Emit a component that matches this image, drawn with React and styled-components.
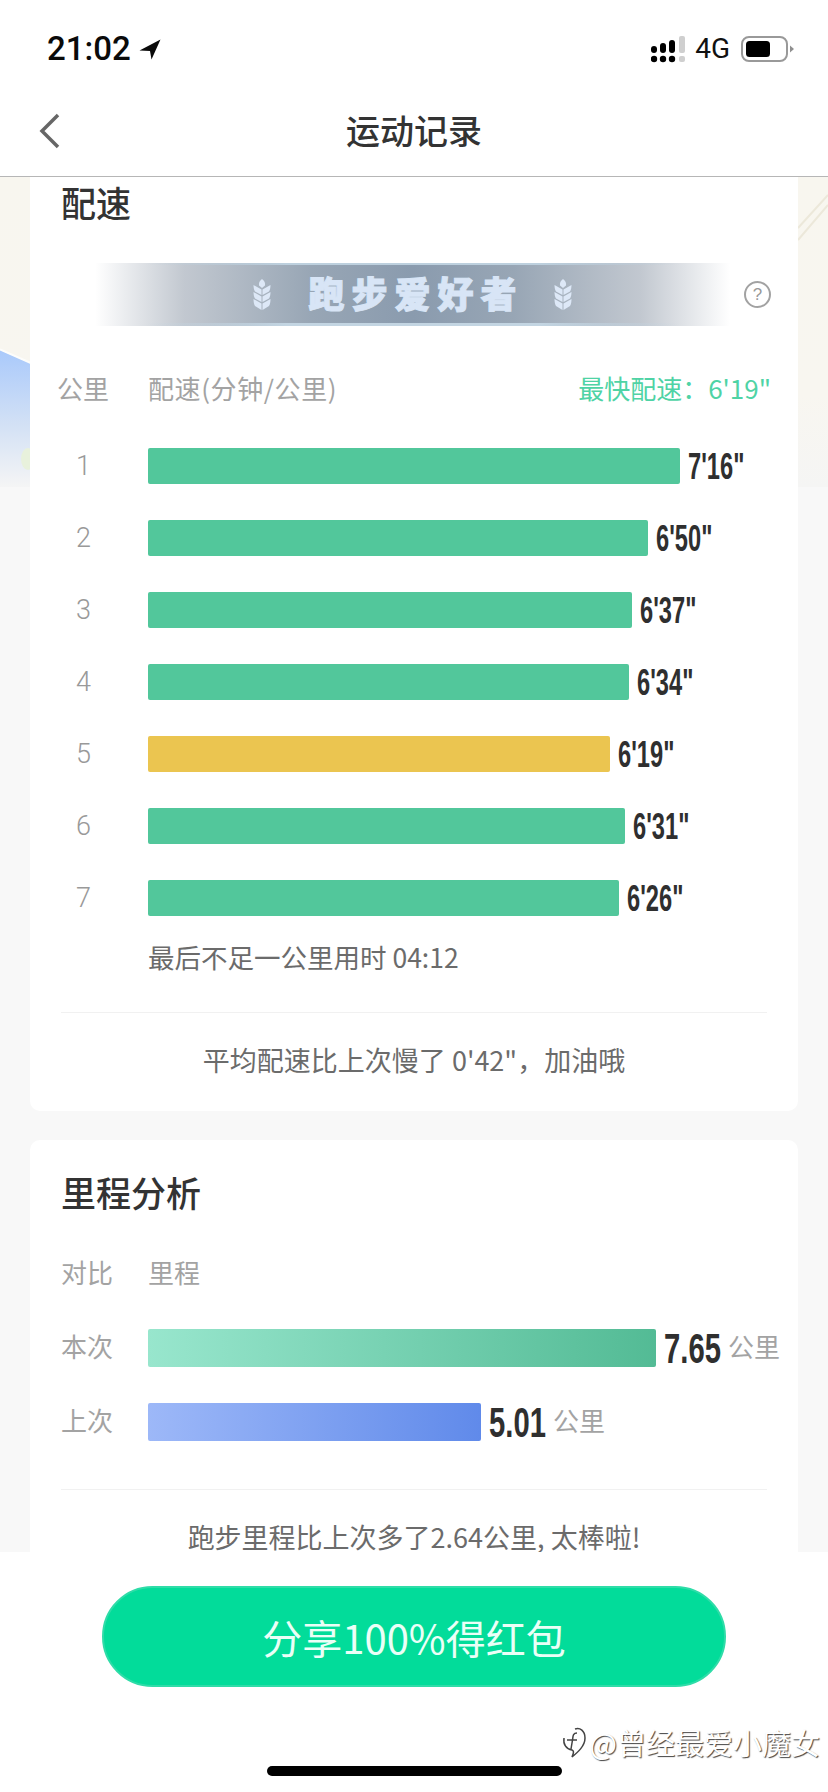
import React from 'react';
import styled, { createGlobalStyle } from 'styled-components';

const GlobalStyle = createGlobalStyle`
  html, body { margin: 0; padding: 0; background: #fff; }
  body { font-family: "Noto Sans CJK SC", "Noto Sans", sans-serif; }
`

const Page = styled.div`
  width: 828px;
  height: 1792px;
  display: flex;
  flex-direction: column;
  position: relative;
  overflow: hidden;
  background: #fff;
`

const StatusBar = styled.div`
  height: 88px;
  flex: none;
  display: flex;
  align-items: center;
  justify-content: space-between;
  padding: 10px 34px 0 47px;
  box-sizing: border-box;
`

const StatusGroup = styled.div`
  display: flex;
  align-items: center;
`

const Clock = styled.span`
  font-family: Roboto, "Liberation Sans", sans-serif;
  font-weight: 500;
  font-size: 33px;
  line-height: 40px;
  color: #0a0a0a;
  margin-right: 8px;
`

const Network = styled.span`
  font-family: Roboto, "Liberation Sans", sans-serif;
  font-size: 28px;
  line-height: 30px;
  color: #111;
  margin: 0 11px 0 10px;
`

const NavBar = styled.div`
  height: 89px;
  flex: none;
  box-sizing: border-box;
  border-bottom: 1px solid #b6b6b6;
  display: flex;
  align-items: center;
  justify-content: center;
  position: relative;
`

const BackIcon = styled.svg`
  position: absolute;
  left: 38px;
  top: 25px;
`

const NavTitle = styled.h1`
  margin: 0 0 4px;
  font-size: 34px;
  font-weight: 500;
  line-height: 44px;
  color: #333;
`

const Scroll = styled.div`
  flex: 1;
  min-height: 0;
  overflow: hidden;
  position: relative;
  background: #f8f8f8;
  display: flex;
  flex-direction: column;
  align-items: center;
  gap: 29px;
`

const MapBackdrop = styled.svg`
  position: absolute;
  left: 0;
  top: 0;
`

const Card = styled.section`
  position: relative;
  flex: none;
  width: 768px;
  box-sizing: border-box;
  background: #fff;
  border-radius: ${p => (p.$clipped ? '0 0 10px 10px' : '10px')};
  padding: ${p => (p.$clipped ? '0 31px 31px' : '27px 31px 31px')};
`

const CardTitle = styled.h2`
  margin: 0;
  height: 54px;
  font-size: 35px;
  font-weight: 500;
  line-height: 50px;
  color: #333;
`

const BannerRow = styled.div`
  display: flex;
  align-items: center;
  margin: 32px 0 0 34px;
`

const Banner = styled.div`
  width: 635px;
  height: 63px;
  flex: none;
  box-sizing: border-box;
  display: flex;
  align-items: center;
  justify-content: center;
  gap: 37px;
  background:
    linear-gradient(90deg, rgba(190, 208, 224, 0) 8%, #bdd0de 30%, #bdd0de 70%, rgba(190, 208, 224, 0) 92%) top / 100% 2px no-repeat,
    linear-gradient(90deg, rgba(190, 208, 224, 0) 8%, #c3d5e2 30%, #c3d5e2 70%, rgba(190, 208, 224, 0) 92%) bottom / 100% 3px no-repeat,
    linear-gradient(90deg, rgba(138, 154, 172, 0) 0%, #c2c8d0 14%, #98a6b5 34%, #8a9bae 50%, #98a6b5 66%, #c2c8d0 86%, rgba(138, 154, 172, 0) 100%);
`

const BannerText = styled.span`
  font-size: 36px;
  font-weight: 900;
  line-height: 44px;
  letter-spacing: 7px;
  margin: 0 -7px 6px 0;
  color: #d8e5f6;
  -webkit-text-stroke: 1px #d8e5f6;
`

const HelpBadge = styled.span`
  width: 27px;
  height: 27px;
  flex: none;
  margin-left: 14px;
  box-sizing: border-box;
  border: 2px solid #a2a2a2;
  border-radius: 50%;
  display: flex;
  align-items: center;
  justify-content: center;
  font-family: "Liberation Sans", sans-serif;
  font-size: 17px;
  color: #999;
`

const HeadRow = styled.div`
  display: flex;
  align-items: center;
  height: 36px;
  box-sizing: border-box;
  padding-bottom: 4px;
  margin-top: ${p => p.$top}px;
`

const HeadCell = styled.span`
  width: ${p => p.$width || 'auto'};
  margin-left: ${p => p.$shift || 0}px;
  flex: ${p => (p.$grow ? 1 : 'none')};
  font-size: 26px;
  line-height: 32px;
  letter-spacing: ${p => p.$spread || 0}px;
  color: #a3a3a3;
`

const FastestPace = styled.span`
  font-size: 26px;
  line-height: 32px;
  color: #4fd3a5;
  margin-right: -4px;
`

const BarList = styled.div`
  display: flex;
  flex-direction: column;
  gap: ${p => p.$gap}px;
  margin-top: ${p => p.$top}px;
`

const BarRow = styled.div`
  display: flex;
  align-items: center;
  height: ${p => p.$height}px;
`

const KmLabel = styled.span`
  width: 87px;
  flex: none;
  box-sizing: border-box;
  padding-left: 15px;
  font-family: Roboto, sans-serif;
  font-weight: 300;
  font-size: 27px;
  color: #999;
`

const CompareLabel = styled.span`
  width: 87px;
  flex: none;
  box-sizing: border-box;
  padding-bottom: 4px;
  font-size: 26px;
  line-height: 32px;
  color: #a3a3a3;
`

const Bar = styled.div`
  height: 100%;
  flex: none;
  border-radius: 2px;
  background: ${p => p.$fill};
`

const Value = styled.span`
  flex: none;
  width: ${p => p.$width}px;
  margin-left: 8px;
  font-family: "Liberation Sans", sans-serif;
  font-weight: 700;
  font-size: ${p => p.$size}px;
  line-height: 1;
  color: #2f2f2f;
  white-space: nowrap;
  transform: scaleX(${p => p.$squeeze});
  transform-origin: left center;
`

const Unit = styled.span`
  flex: none;
  margin-left: 6px;
  padding-bottom: 4px;
  font-size: 26px;
  line-height: 32px;
  white-space: nowrap;
  color: #a3a3a3;
`

const Note = styled.p`
  margin: 25px 0 0 87px;
  padding-bottom: 4px;
  font-size: 26.5px;
  line-height: 32px;
  color: #6b6b6b;
`

const Divider = styled.hr`
  margin: ${p => p.$top}px 0 0;
  border: 0;
  height: 1px;
  background: #f1f1f1;
`

const Summary = styled.p`
  margin: 31px 0 0;
  padding-bottom: 4px;
  text-align: center;
  font-size: 27px;
  line-height: 32px;
  color: #6b6b6b;
`

const BottomBar = styled.div`
  flex: none;
  height: 240px;
  background: #fff;
  display: flex;
  flex-direction: column;
  align-items: center;
  position: relative;
`

const ShareButton = styled.button`
  width: 624px;
  height: 101px;
  margin-top: 34px;
  border: 2px solid #2fdca8;
  border-radius: 51px;
  background: #02dc9a;
  color: #eafff7;
  font-family: inherit;
  font-size: 40px;
  padding: 0;
`

const HomeIndicator = styled.div`
  width: 295px;
  height: 10px;
  margin-top: 79px;
  border-radius: 5px;
  background: #000;
`

const Watermark = styled.div`
  position: absolute;
  right: 8px;
  top: 172px;
  display: flex;
  align-items: center;
  gap: 4px;
  font-size: 29px;
  line-height: 36px;
  color: #fff;
  text-shadow: 1px 1px 1px #444;
`

const paces = [
  { km: 1, width: 532, time: `7'16"` },
  { km: 2, width: 500, time: `6'50"` },
  { km: 3, width: 484, time: `6'37"` },
  { km: 4, width: 481, time: `6'34"` },
  { km: 5, width: 462, time: `6'19"`, best: true },
  { km: 6, width: 477, time: `6'31"` },
  { km: 7, width: 471, time: `6'26"` },
];

const compare = [
  { label: '本次', width: 508, value: '7.65', fill: 'linear-gradient(90deg, #98e6cd, #53bb95)' },
  { label: '上次', width: 333, value: '5.01', fill: 'linear-gradient(90deg, #9db8f8, #608aea)' },
];

const Wheat = () => (
  <svg width="18" height="31" viewBox="0 0 18 31" fill="#dde8f7">
    <path d="M9 0c2.500 2 3.500 4 3 6.500L9 9 6 6.500C5.500 4 6.500 2 9 0z" />
    <path d="M0.500 6l8 4.500V16L2 12.500C1 11 0.500 8.500 0.500 6zM17.500 6l-8 4.500V16l6.500-3.500C17 11 17.500 8.500 17.500 6z" />
    <path d="M0.500 13l8 4.500V23L2 19.500C1 18 0.500 15.500 0.500 13zM17.500 13l-8 4.500V23l6.500-3.500C17 18 17.500 15.500 17.500 13z" />
    <path d="M0.500 20l8 4.500V31L2 27C1 25.500 0.500 22.500 0.500 20zM17.500 20l-8 4.500V31l6.500-4C17 25.500 17.500 22.500 17.500 20z" />
  </svg>
);

const App = () => (
  <Page>
    <GlobalStyle />
    <StatusBar>
      <StatusGroup>
        <Clock>21:02</Clock>
        <svg width="22" height="21" viewBox="0 0 22 21">
          <path d="M21.500 0.500L0.500 11.500 11 12 12.500 20.500z" fill="#0a0a0a" />
        </svg>
      </StatusGroup>
      <StatusGroup>
        <svg width="34" height="27" viewBox="0 0 34 27">
          <rect x="0" y="10" width="6" height="7" rx="3" fill="#000" />
          <rect x="9" y="7" width="6" height="10" rx="3" fill="#000" />
          <rect x="18" y="4" width="6" height="13" rx="3" fill="#000" />
          <rect x="28" y="0" width="6" height="17" rx="2" fill="#cfcfcf" />
          <circle cx="3" cy="23" r="3.200" fill="#000" />
          <circle cx="12" cy="23" r="3.200" fill="#000" />
          <circle cx="21" cy="23" r="3.200" fill="#000" />
          <rect x="28" y="20" width="6" height="6" rx="2" fill="#cfcfcf" />
        </svg>
        <Network>4G</Network>
        <svg width="53" height="26" viewBox="0 0 53 26">
          <rect x="1" y="1" width="45" height="24" rx="7" fill="#fff" stroke="#999" strokeWidth="2" />
          <rect x="5" y="5" width="24" height="16" rx="3.500" fill="#000" />
          <path d="M49 9.500l4 3.500-4 3.500z" fill="#8f8f8f" />
        </svg>
      </StatusGroup>
    </StatusBar>

    <NavBar>
      <BackIcon width="24" height="36" viewBox="0 0 24 36">
        <path d="M20 2L4 18l16 16" fill="none" stroke="#666" strokeWidth="3.500" />
      </BackIcon>
      <NavTitle>运动记录</NavTitle>
    </NavBar>

    <Scroll>
      <MapBackdrop width="828" height="310" viewBox="0 0 828 310">
        <defs>
          <linearGradient id="land" x1="0" y1="0" x2="0" y2="1">
            <stop offset="0" stopColor="#f8f6ef" />
            <stop offset="0.7" stopColor="#f8f6f0" />
            <stop offset="1" stopColor="#f5f5f4" />
          </linearGradient>
          <linearGradient id="water" x1="0" y1="0" x2="0" y2="1">
            <stop offset="0" stopColor="#a9c9fb" />
            <stop offset="0.55" stopColor="#d3e1f5" />
            <stop offset="1" stopColor="#f5f5f5" />
          </linearGradient>
        </defs>
        <rect width="828" height="310" fill="url(#land)" />
        <path d="M0 173L32 187V310H0z" fill="url(#water)" />
        <path d="M0 172.500L32 186.500" stroke="#fdfdfb" strokeWidth="2" />
        <ellipse cx="28" cy="282" rx="7" ry="11" fill="#e8f1dc" />
        <path d="M798 51L828 18M798 63L828 28" stroke="#ece8da" strokeWidth="2" fill="none" />
      </MapBackdrop>

      <Card $clipped>
        <CardTitle>配速</CardTitle>
        <BannerRow>
          <Banner>
            <Wheat />
            <BannerText>跑步爱好者</BannerText>
            <Wheat />
          </Banner>
          <HelpBadge>?</HelpBadge>
        </BannerRow>
        <HeadRow $top={46}>
          <HeadCell $width="91px" $shift={-4}>公里</HeadCell>
          <HeadCell $grow $spread={0.6}>配速(分钟/公里)</HeadCell>
          <FastestPace>最快配速：6'19"</FastestPace>
        </HeadRow>
        <BarList $gap={36} $top={40}>
          {paces.map(p => (
            <BarRow key={p.km} $height={36}>
              <KmLabel>{p.km}</KmLabel>
              <Bar style={{ width: p.width }} $fill={p.best ? '#ebc550' : '#52c79b'} />
              <Value $width={60} $size={37} $squeeze={0.64}>{p.time}</Value>
            </BarRow>
          ))}
        </BarList>
        <Note>最后不足一公里用时 04:12</Note>
        <Divider $top={35} />
        <Summary>平均配速比上次慢了 0'42"，加油哦</Summary>
      </Card>

      <Card>
        <CardTitle>里程分析</CardTitle>
        <HeadRow $top={35}>
          <HeadCell $width="87px">对比</HeadCell>
          <HeadCell>里程</HeadCell>
        </HeadRow>
        <BarList $gap={36} $top={37}>
          {compare.map(c => (
            <BarRow key={c.label} $height={38}>
              <CompareLabel>{c.label}</CompareLabel>
              <Bar style={{ width: c.width }} $fill={c.fill} />
              <Value $width={58} $size={43} $squeeze={0.68}>{c.value}</Value>
              <Unit>公里</Unit>
            </BarRow>
          ))}
        </BarList>
        <Divider $top={48} />
        <Summary>跑步里程比上次多了2.64公里, 太棒啦!</Summary>
      </Card>
    </Scroll>

    <BottomBar>
      <ShareButton>分享100%得红包</ShareButton>
      <HomeIndicator />
      <Watermark>
        <svg width="26" height="32" viewBox="0 0 26 32" fill="none" stroke="#444" strokeWidth="1.500">
          <path d="M15 3C20 1 25 5 25 12 25 20 18 26 12 31 14 26 14 25 12 24 6 23 3 18 4 12" />
          <path d="M17 7C13 7 13 10 12.500 14L11 23M7 14H17" />
        </svg>
        <span>@曾经最爱小魔女</span>
      </Watermark>
    </BottomBar>
  </Page>
);

export default App;
